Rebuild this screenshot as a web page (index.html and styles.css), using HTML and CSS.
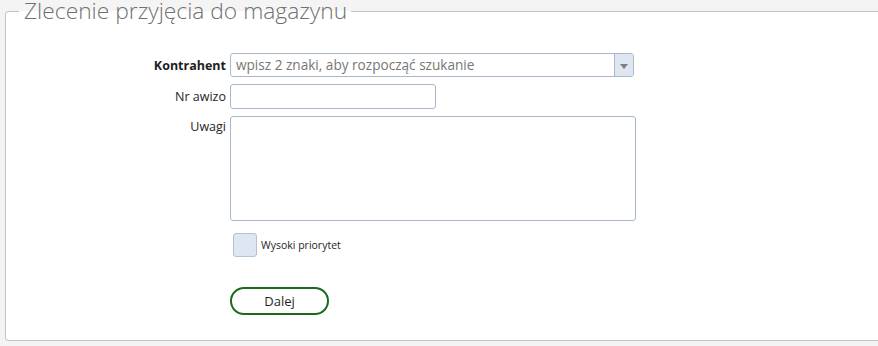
FILE: index.html
```html
<!DOCTYPE html>
<html lang="pl">
<head>
    <meta charset="UTF-8">
    <meta name="viewport" content="width=device-width, initial-scale=1.0">
    <title>Zlecenie przyjęcia do magazynu</title>
    <link rel="stylesheet" href="styles.css">
</head>
<body>
    <fieldset class="order-box">
        <legend class="order-title">Zlecenie przyjęcia do magazynu</legend>
        <div class="order-form">
            <label class="field-label strong" for="contractor">Kontrahent</label>
            <div class="combo" id="contractor">
                <span class="combo-text">wpisz 2 znaki, aby rozpocząć szukanie</span>
                <span class="combo-arrow"></span>
            </div>

            <label class="field-label" for="notice">Nr awizo</label>
            <input class="text-input" id="notice" type="text">

            <label class="field-label top" for="notes">Uwagi</label>
            <textarea class="text-area" id="notes"></textarea>

            <div></div>
            <label class="check-row">
                <span class="check-box"></span>
                <span class="check-text">Wysoki priorytet</span>
            </label>

            <div></div>
            <div class="actions">
                <button class="btn-next" type="button">Dalej</button>
            </div>
        </div>
    </fieldset>
</body>
</html>
```

FILE: styles.css
```css
:root {
    --page-bg: #f4f4f4;
    --line: #c4c4c4;
    --field-border: #a9b9c8;
    --field-fill: #dde6f1;
    --text: #1e1e1e;
    --muted: #777;
    --green: #1c6a1c;
}

html, body {
    overflow: hidden;
}

body {
    margin: 0;
    padding: 0 0 0 5px;
    background: var(--page-bg);
    font-family: "Open Sans", "DejaVu Sans", sans-serif;
    color: var(--text);
}

.order-box {
    margin: -3px -30px 0 0;
    padding: 0 0 25px;
    border: 1px solid var(--line);
    border-right: none;
    border-radius: 4px 0 0 4px;
    background: #fff;
}

.order-title {
    margin-left: 13px;
    padding: 0 4px 0 5px;
    font-family: "Open Sans", "DejaVu Sans", sans-serif;
    font-weight: 300;
    font-size: 22.8px;
    line-height: 28px;
    color: #707070;
}

.order-form {
    display: grid;
    grid-template-columns: 220px auto;
    column-gap: 4px;
    row-gap: 7px;
    justify-content: start;
    align-items: center;
    padding-top: 28px;
}

.field-label {
    text-align: right;
    font-size: 12.5px;
}

.field-label.strong {
    font-weight: 700;
}

.field-label.top {
    align-self: start;
    padding-top: 2px;
}

.combo {
    display: flex;
    width: 402px;
    height: 22px;
    border: 1px solid var(--field-border);
    border-radius: 3px;
    background: #fff;
    overflow: hidden;
}

.combo-text {
    flex: 1;
    padding-left: 5px;
    font-size: 13.6px;
    line-height: 22px;
    color: var(--muted);
}

.combo-arrow {
    width: 18px;
    border-left: 1px solid var(--field-border);
    background: var(--field-fill);
    display: flex;
    align-items: center;
    justify-content: center;
}

.combo-arrow::after {
    content: "";
    border-left: 4px solid transparent;
    border-right: 4px solid transparent;
    border-top: 5px solid #7a7f86;
    margin-top: 2px;
}

.text-input {
    box-sizing: border-box;
    width: 206px;
    height: 25px;
    margin: 0;
    border: 1px solid var(--field-border);
    border-radius: 3px;
}

.text-area {
    box-sizing: border-box;
    width: 406px;
    height: 105px;
    margin: 0;
    border: 1px solid var(--field-border);
    border-radius: 3px;
    resize: none;
}

.check-row {
    display: flex;
    align-items: center;
    gap: 4px;
    margin-top: 5px;
    padding-left: 3px;
}

.check-box {
    box-sizing: border-box;
    width: 24px;
    height: 24px;
    border: 1px solid #b4c3d2;
    border-radius: 3px;
    background: var(--field-fill);
}

.check-text {
    font-size: 10.5px;
}

.actions {
    padding-top: 23px;
}

.btn-next {
    box-sizing: border-box;
    width: 99px;
    height: 28px;
    border: 2px solid var(--green);
    border-radius: 14px;
    background: #fff;
    font-family: "Open Sans", "DejaVu Sans", sans-serif;
    font-size: 13px;
    color: var(--text);
}
```
